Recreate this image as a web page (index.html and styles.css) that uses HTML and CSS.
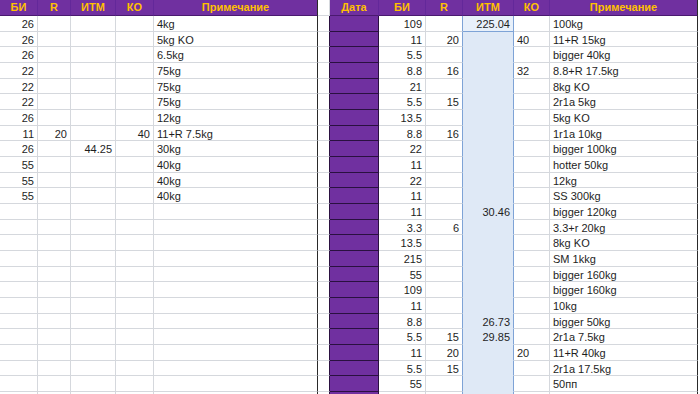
FILE: index.html
```html
<!DOCTYPE html>
<html lang="ru">
<head>
<meta charset="utf-8">
<title>Sheet</title>
<link rel="stylesheet" href="styles.css">
</head>
<body>
<div class="sheet">
  <div class="tbl left">
    <span class="h">БИ</span><span class="h">R</span><span class="h">ИТМ</span><span class="h">КО</span><span class="h">Примечание</span>
    <span>26</span><span></span><span></span><span></span><span>4kg</span>
    <span>26</span><span></span><span></span><span></span><span>5kg KO</span>
    <span>26</span><span></span><span></span><span></span><span>6.5kg</span>
    <span>22</span><span></span><span></span><span></span><span>75kg</span>
    <span>22</span><span></span><span></span><span></span><span>75kg</span>
    <span>22</span><span></span><span></span><span></span><span>75kg</span>
    <span>26</span><span></span><span></span><span></span><span>12kg</span>
    <span>11</span><span>20</span><span></span><span>40</span><span>11+R 7.5kg</span>
    <span>26</span><span></span><span>44.25</span><span></span><span>30kg</span>
    <span>55</span><span></span><span></span><span></span><span>40kg</span>
    <span>55</span><span></span><span></span><span></span><span>40kg</span>
    <span>55</span><span></span><span></span><span></span><span>40kg</span>
    <span></span><span></span><span></span><span></span><span></span>
    <span></span><span></span><span></span><span></span><span></span>
    <span></span><span></span><span></span><span></span><span></span>
    <span></span><span></span><span></span><span></span><span></span>
    <span></span><span></span><span></span><span></span><span></span>
    <span></span><span></span><span></span><span></span><span></span>
    <span></span><span></span><span></span><span></span><span></span>
    <span></span><span></span><span></span><span></span><span></span>
    <span></span><span></span><span></span><span></span><span></span>
    <span></span><span></span><span></span><span></span><span></span>
    <span></span><span></span><span></span><span></span><span></span>
    <span></span><span></span><span></span><span></span><span></span>
    <span></span><span></span><span></span><span></span><span></span>
  </div>
  <div class="tbl right">
    <span class="gh"></span><span class="h">Дата</span><span class="h">БИ</span><span class="h">R</span><span class="h">ИТМ</span><span class="h">КО</span><span class="h">Примечание</span>
    <span></span><span></span><span>109</span><span></span><span class="act">225.04</span><span></span><span>100kg</span>
    <span></span><span></span><span>11</span><span>20</span><span></span><span>40</span><span>11+R 15kg</span>
    <span></span><span></span><span>5.5</span><span></span><span></span><span></span><span>bigger 40kg</span>
    <span></span><span></span><span>8.8</span><span>16</span><span></span><span>32</span><span>8.8+R 17.5kg</span>
    <span></span><span></span><span>21</span><span></span><span></span><span></span><span>8kg KO</span>
    <span></span><span></span><span>5.5</span><span>15</span><span></span><span></span><span>2r1a 5kg</span>
    <span></span><span></span><span>13.5</span><span></span><span></span><span></span><span>5kg KO</span>
    <span></span><span></span><span>8.8</span><span>16</span><span></span><span></span><span>1r1a 10kg</span>
    <span></span><span></span><span>22</span><span></span><span></span><span></span><span>bigger 100kg</span>
    <span></span><span></span><span>11</span><span></span><span></span><span></span><span>hotter 50kg</span>
    <span></span><span></span><span>22</span><span></span><span></span><span></span><span>12kg</span>
    <span></span><span></span><span>11</span><span></span><span></span><span></span><span>SS 300kg</span>
    <span></span><span></span><span>11</span><span></span><span>30.46</span><span></span><span>bigger 120kg</span>
    <span></span><span></span><span>3.3</span><span>6</span><span></span><span></span><span>3.3+r 20kg</span>
    <span></span><span></span><span>13.5</span><span></span><span></span><span></span><span>8kg KO</span>
    <span></span><span></span><span>215</span><span></span><span></span><span></span><span>SM 1kkg</span>
    <span></span><span></span><span>55</span><span></span><span></span><span></span><span>bigger 160kg</span>
    <span></span><span></span><span>109</span><span></span><span></span><span></span><span>bigger 160kg</span>
    <span></span><span></span><span>11</span><span></span><span></span><span></span><span>10kg</span>
    <span></span><span></span><span>8.8</span><span></span><span>26.73</span><span></span><span>bigger 50kg</span>
    <span></span><span></span><span>5.5</span><span>15</span><span>29.85</span><span></span><span>2r1a 7.5kg</span>
    <span></span><span></span><span>11</span><span>20</span><span></span><span>20</span><span>11+R 40kg</span>
    <span></span><span></span><span>5.5</span><span>15</span><span></span><span></span><span>2r1a 17.5kg</span>
    <span></span><span></span><span>55</span><span></span><span></span><span></span><span>50пп</span>
    <span></span><span></span><span></span><span></span><span></span><span></span><span></span>
  </div>
</div>
</body>
</html>
```

FILE: styles.css
```css
html, body {
  margin: 0;
  padding: 0;
  background: #ffffff;
}

body {
  font-family: "Liberation Sans", Arial, sans-serif;
  font-size: 11px;
  color: #1e1e1e;
  overflow: hidden;
}

.sheet {
  display: flex;
  width: 700px;
  height: 394px;
  overflow: hidden;
}

.tbl {
  display: grid;
  grid-template-rows: 16px repeat(8, 16px 15px 16px) 16px;
  align-content: start;
}

.left {
  grid-template-columns: 38px 33px 45px 38px 164px;
}

.right {
  grid-template-columns: 12px 49px 47px 37px 51px 36px 148px;
}

.tbl > span {
  display: block;
  box-sizing: border-box;
  border-right: 1px solid #d5d8dd;
  border-bottom: 1px solid #d5d8dd;
  line-height: 16px;
  padding: 0 3px 0 2px;
  white-space: nowrap;
  overflow: hidden;
  text-align: right;
}

/* left table: notes column */
.left > span:nth-child(5n) {
  text-align: left;
  padding-left: 3px;
  border-right-color: #2a2a2a;
}

/* right table columns */
.right > span:nth-child(7n+1) {
  border-right-color: #2a1040;
}

.right > span:nth-child(7n+2) {
  background: #7030a0;
  border-right-color: #2a1040;
  border-bottom-color: #2a1040;
}

.right > span:nth-child(7n+4) {
  border-right-color: #7ea3d6;
}

.right > span:nth-child(7n+5) {
  background: #dfe9f6;
  border-right-color: #7ea3d6;
  border-bottom-color: #dfe9f6;
}

.right > span:nth-child(7n+6) {
  text-align: left;
  padding-left: 3px;
}

.right > span:nth-child(7n) {
  text-align: left;
  padding-left: 3px;
  border-right-color: #2a2a2a;
}

.right > span.act {
  background: #e8f0fa;
  border-bottom-color: #7ea3d6;
}

/* header cells */
.tbl > span.h {
  background: #7030a0;
  color: #ffc000;
  font-weight: bold;
  text-align: center;
  padding: 0;
  line-height: 15px;
  border-right-color: #63289a;
  border-bottom-color: #4a1a70;
}

.left > span.h:nth-child(5) {
  border-right-color: #2a2a2a;
}

.right > span.h:nth-child(7) {
  border-right-color: #2a2a2a;
}

.right > span.gh {
  background: #ffffff;
  border-right-color: #d5d8dd;
}
```
